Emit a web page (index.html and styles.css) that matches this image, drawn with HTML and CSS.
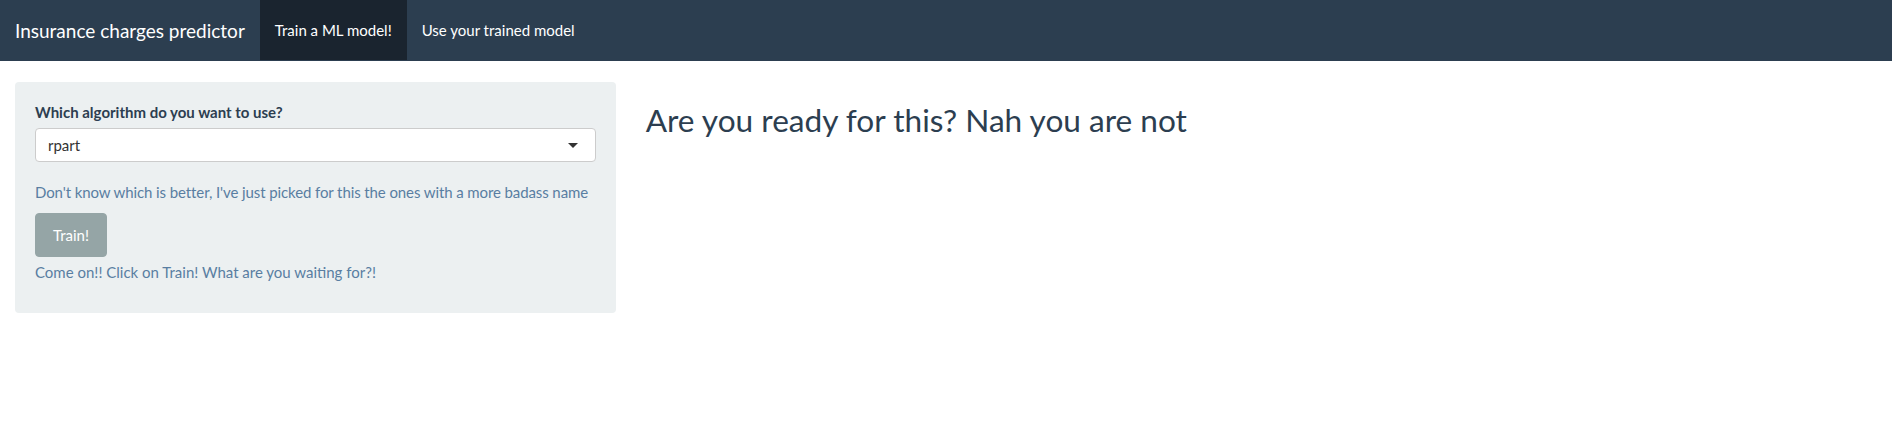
FILE: index.html
```html
<!DOCTYPE html>
<html>
<head>
<meta charset="utf-8">
<title>Insurance charges predictor</title>
<link rel="stylesheet" href="styles.css">
</head>
<body>
<nav class="navbar">
  <span class="brand">Insurance charges predictor</span>
  <ul class="nav">
    <li class="active"><a>Train a ML model!</a></li>
    <li><a>Use your trained model</a></li>
  </ul>
</nav>
<div class="container">
  <div class="row">
    <div class="sidebar">
      <div class="well">
        <label class="label">Which algorithm do you want to use?</label>
        <div class="select">
          <span class="select-value">rpart</span>
          <span class="caret"></span>
        </div>
        <span class="help-block help-single">Don't know which is better, I've just picked for this the ones with a more badass name</span>
        <button class="btn">Train!</button>
        <span class="help-block">Come on!! Click on Train! What are you waiting for?!</span>
      </div>
    </div>
    <div class="main">
      <h2 class="title">Are you ready for this? Nah you are not</h2>
    </div>
  </div>
</div>
</body>
</html>
```

FILE: styles.css
```css
* { box-sizing: border-box; }
html, body { margin: 0; padding: 0; }
body {
  font-family: Lato, "Helvetica Neue", Helvetica, Arial, sans-serif;
  font-size: 15px;
  line-height: 1.42857;
  color: #2c3e50;
  background: #fff;
}
.navbar {
  display: flex;
  align-items: stretch;
  height: 61px;
  background: #2c3e50;
  border-bottom: 1px solid transparent;
  margin-bottom: 21px;
}
.brand {
  display: block;
  padding: 19.5px 15px;
  font-size: 19px;
  line-height: 21px;
  color: #fff;
}
.nav {
  display: flex;
  list-style: none;
  margin: 0;
  padding: 0;
}
.nav li a {
  display: block;
  padding: 19.5px 15px;
  line-height: 21px;
  color: #fff;
  font-size: 15px;
  height: 60px;
}
.nav li.active a { background: #1a242f; }
.container {
  padding: 0 15px;
}
.row {
  display: flex;
  margin: 0 -15px;
}
.sidebar {
  flex: 0 0 33.33333%;
  max-width: 33.33333%;
  padding: 0 15px;
}
.main {
  flex: 0 0 66.66667%;
  max-width: 66.66667%;
  padding: 0 15px;
}
.well {
  background: #ecf0f1;
  border: 1px solid transparent;
  border-radius: 4px;
  padding: 19px;
  min-height: 20px;
}
.label {
  display: block;
  font-weight: bold;
  margin-bottom: 5px;
  line-height: 21px;
}
.select {
  display: flex;
  align-items: center;
  justify-content: space-between;
  height: 34px;
  background: #fff;
  border: 1px solid #cccccc;
  border-radius: 4px;
  padding: 0 17px 0 12px;
  color: #333;
  margin-bottom: 20px;
}
.select-value { line-height: 20px; }
.caret {
  width: 0;
  height: 0;
  border-left: 5px solid transparent;
  border-right: 5px solid transparent;
  border-top: 5px solid #333;
}
.help-block {
  display: block;
  margin: 5px 0 10px;
  color: #597ea2;
  line-height: 21px;
}
.help-single {
  white-space: nowrap;
  letter-spacing: -0.1px;
}
.btn {
  display: block;
  font-family: inherit;
  font-size: 15px;
  line-height: 21px;
  padding: 10px 17px;
  height: 44px;
  color: #fff;
  background: #95a5a6;
  border: 1px solid #95a5a6;
  border-radius: 4px;
}
.title {
  margin: 21px 0 10.5px;
  font-size: 31.6px;
  font-weight: 400;
  line-height: 1.1;
  color: #2c3e50;
}
```
